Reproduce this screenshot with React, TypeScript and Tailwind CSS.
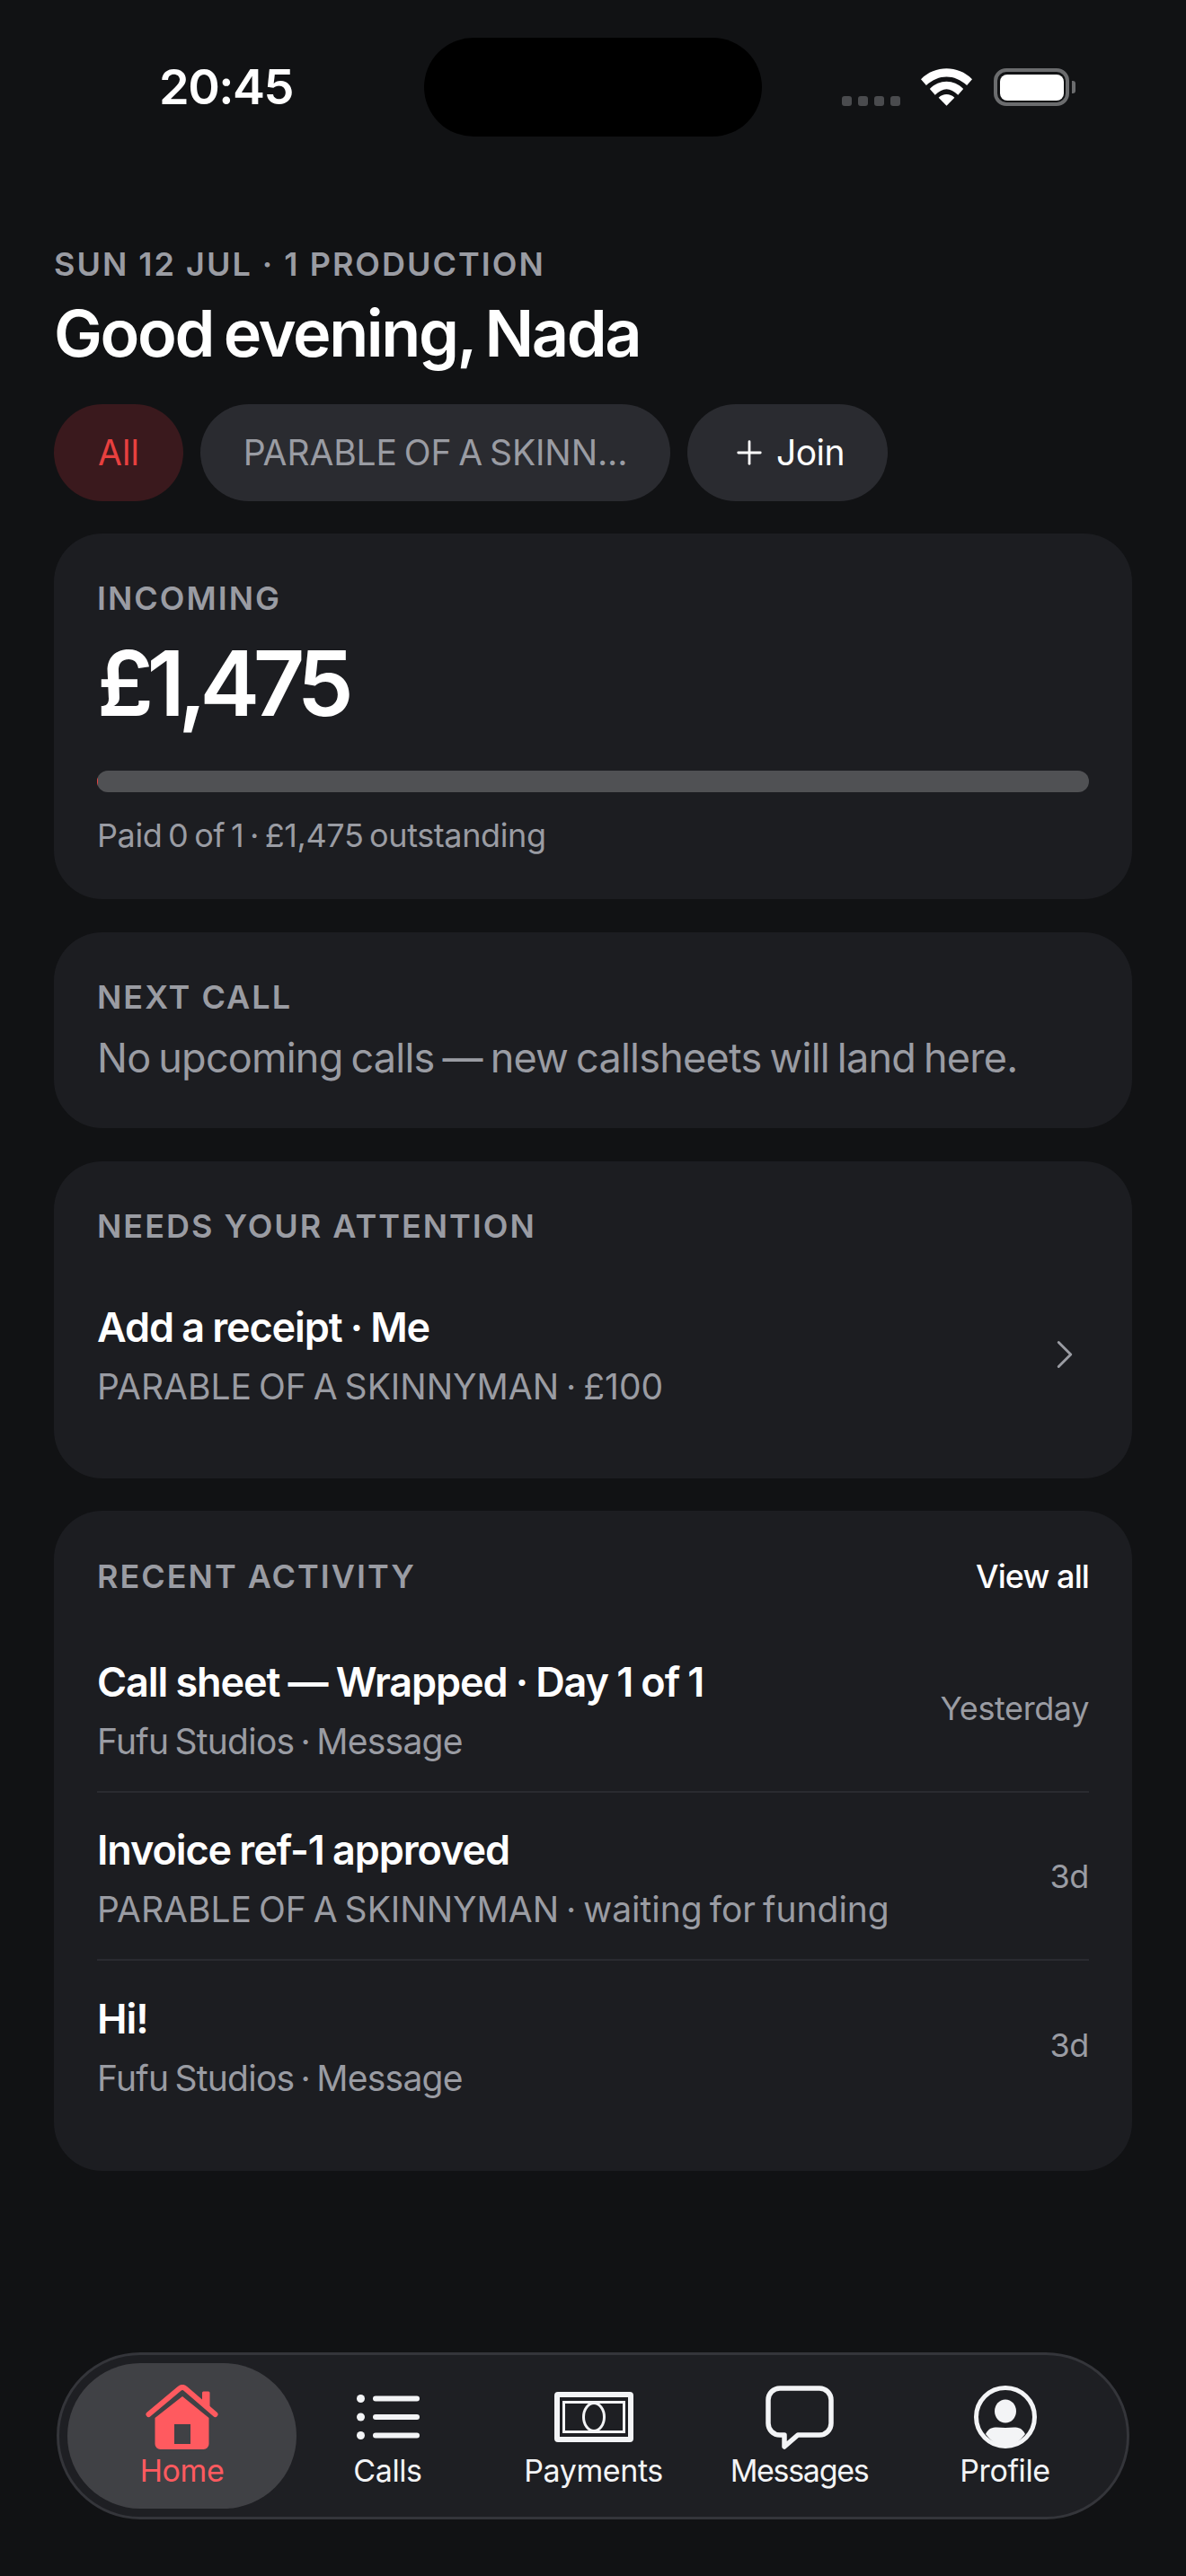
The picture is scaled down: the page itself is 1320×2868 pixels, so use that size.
import { ChevronRight, Plus } from "lucide-react";

const font = "font-['Inter','Liberation_Sans',sans-serif]";

const Eyebrow = (props: { children: React.ReactNode }) => (
  <div className="text-[36px] leading-[44px] font-semibold tracking-[2px] text-[#9a9ca3]">
    {props.children}
  </div>
);

const Card = (props: { className?: string; children: React.ReactNode }) => (
  <section className={`rounded-[54px] bg-[#1c1d21] px-[48px] ${props.className ?? ""}`}>
    {props.children}
  </section>
);

const StatusBar = () => (
  <div className="flex h-[152px] items-center pt-[42px] pl-[177px]">
    <div className="w-[295px] text-[54px] leading-[60px] font-semibold tracking-[-1.5px] text-white">20:45</div>
    <div className="h-[110px] w-[376px] rounded-[55px] bg-black" />
    <div className="ml-[89px] flex h-[42px] items-end">
      <div className="flex gap-[7px]">
        {[0, 1, 2, 3].map((i) => (
          <span key={i} className="h-[11px] w-[11px] rounded-[3px] bg-[#4a4b4e]" />
        ))}
      </div>
      <svg className="ml-[23px]" width="57" height="42" viewBox="0 0 58 42" fill="#fff">
        <path d="M0 12 C16 -4 42 -4 58 12 L52 19 C38 6 20 6 6 19 Z" />
        <path d="M10 23 C21 12 37 12 48 23 L42 30 C33 21 25 21 16 30 Z" />
        <path d="M20 33 C25 28 33 28 38 33 L29 42 Z" />
      </svg>
      <div className="ml-[24px] flex items-center">
        <div className="flex h-[42px] w-[84px] items-center justify-center rounded-[14px] border-[4px] border-[#6b6c6e]">
          <div className="h-[29px] w-[71px] rounded-[8px] bg-white" />
        </div>
        <div className="ml-[3px] h-[14px] w-[4px] rounded-r-[3px] bg-[#6b6c6e]" />
      </div>
    </div>
  </div>
);

const HomeIcon = () => (
  <svg width="82" height="72" viewBox="0 0 82 72" fill="#ff5a5f">
    <path d="M63 9 a1.5 1.5 0 0 1 1.5 -1.5 h5.5 a1.5 1.5 0 0 1 1.5 1.5 v18 l-8.5 -7.5 Z" />
    <path d="M41 13 L70.5 37 V66 a6 6 0 0 1 -6 6 H16.5 a6 6 0 0 1 -6 -6 V37 Z M32 44 V66 H50 V44 Z" fillRule="evenodd" />
    <path d="M3.5 33 L37.5 4.5 Q41 1.5 44.5 4.5 L77.5 33" fill="none" stroke="#ff5a5f" strokeWidth="6" strokeLinecap="round" strokeLinejoin="round" />
  </svg>
);

const CallsIcon = () => (
  <svg width="70" height="50" viewBox="0 0 70 50" fill="#f3f4f6">
    <circle cx="4.5" cy="4.5" r="4.5" />
    <circle cx="4.5" cy="25" r="4.5" />
    <circle cx="4.5" cy="45.5" r="4.5" />
    <rect x="18" y="1.5" width="52" height="6" rx="3" />
    <rect x="18" y="22" width="52" height="6" rx="3" />
    <rect x="18" y="42.5" width="52" height="6" rx="3" />
  </svg>
);

const PaymentsIcon = () => (
  <svg width="88" height="56" viewBox="0 0 88 56" fill="none" stroke="#f3f4f6">
    <rect x="3" y="3" width="82" height="50" rx="1" strokeWidth="6" />
    <rect x="10.5" y="11.5" width="67" height="33" strokeWidth="3" />
    <ellipse cx="44" cy="28" rx="11.5" ry="15.5" strokeWidth="3" />
  </svg>
);

const MessagesIcon = () => (
  <svg width="76" height="71" viewBox="0 0 76 71" fill="none" stroke="#f3f4f6" strokeWidth="5.5" strokeLinejoin="round">
    <path d="M16 3 H60 a13 13 0 0 1 13 13 V42 a13 13 0 0 1 -13 13 H36 L21 68 V55 H16 a13 13 0 0 1 -13 -13 V16 a13 13 0 0 1 13 -13 Z" />
  </svg>
);

const ProfileIcon = () => (
  <svg width="70" height="70" viewBox="0 0 70 70">
    <circle cx="35" cy="35" r="32.5" fill="none" stroke="#f3f4f6" strokeWidth="5" />
    <ellipse cx="35" cy="28.5" rx="12" ry="13" fill="#f3f4f6" />
    <path d="M13 54 C18 44 26 47 35 47 C44 47 52 44 57 54 C51 62 43 67 35 67 C27 67 19 62 13 54 Z" fill="#f3f4f6" />
  </svg>
);

const tabs = [
  { label: "Home", icon: <HomeIcon />, active: true, tracking: "tracking-[-0.4px]" },
  { label: "Calls", icon: <CallsIcon />, tracking: "tracking-[-0.4px]" },
  { label: "Payments", icon: <PaymentsIcon />, tracking: "tracking-[-0.4px]" },
  { label: "Messages", icon: <MessagesIcon />, tracking: "tracking-[-1.3px]" },
  { label: "Profile", icon: <ProfileIcon />, tracking: "tracking-[-0.4px]" },
];

const activity = [
  { title: "Call sheet — Wrapped · Day 1 of 1", sub: "Fufu Studios · Message", when: "Yesterday", tight: true },
  { title: "Invoice ref-1 approved", sub: "PARABLE OF A SKINNYMAN · waiting for funding", when: "3d" },
  { title: "Hi!", sub: "Fufu Studios · Message", when: "3d", tight: true },
];

export default function App() {
  return (
    <div className={`${font} flex h-[2868px] w-[1320px] flex-col overflow-hidden bg-[#111214] text-white`}>
      <StatusBar />

      <main className="flex flex-col px-[60px] pt-[120px]">
        <Eyebrow>SUN 12 JUL · 1 PRODUCTION</Eyebrow>
        <h1 className="mt-[11px] text-[72px] leading-[88px] font-semibold tracking-[-2.4px] [word-spacing:-4px]">Good evening, Nada</h1>

        <div className="mt-[35px] flex gap-[19px] text-[39px] leading-[108px]">
          <div className="w-[144px] rounded-full bg-[#3a191d] text-center text-[#e8403f]">All</div>
          <div className="w-[523px] rounded-full bg-[#2a2b30] text-center tracking-[-0.1px] text-[#9a9ca3] [word-spacing:-3px]">PARABLE OF A SKINN...</div>
          <div className="flex w-[223px] items-center justify-center gap-[9px] rounded-full bg-[#2a2b30] tracking-[-0.5px]">
            <Plus size={42} strokeWidth={1.6} />
            Join
          </div>
        </div>

        <div className="mt-[36px] flex flex-col gap-[37px]">
          <Card className="h-[407px] pt-[50px]">
            <Eyebrow>INCOMING</Eyebrow>
            <div className="mt-[17px] text-[100px] leading-[112px] font-semibold tracking-[-7.5px]">£1,475</div>
            <div className="mt-[41px] h-[24px] overflow-hidden rounded-full bg-[#505154]">
              <div className="h-full w-[1px] bg-[#e8403f]" />
            </div>
            <p className="mt-[24px] text-[36px] leading-[48px] tracking-[-0.4px] text-[#9a9ca3] [word-spacing:-3px]">Paid 0 of 1 · £1,475 outstanding</p>
          </Card>

          <Card className="h-[218px] pt-[50px]">
            <Eyebrow>NEXT CALL</Eyebrow>
            <p className="mt-[16px] text-[45px] leading-[60px] tracking-[-0.76px] text-[#9a9ca3] [word-spacing:-3px]">
              No upcoming calls — new callsheets will land here.
            </p>
          </Card>

          <Card className="h-[353px] pt-[50px]">
            <Eyebrow>NEEDS YOUR ATTENTION</Eyebrow>
            <div className="mt-[61px] flex items-center justify-between">
              <div>
                <div className="text-[45px] leading-[60px] font-semibold tracking-[-1.1px] [word-spacing:-1px]">Add a receipt · Me</div>
                <div className="mt-[9px] text-[39px] leading-[54px] text-[#9a9ca3] [word-spacing:-3px]">PARABLE OF A SKINNYMAN · £100</div>
              </div>
              <ChevronRight size={54} strokeWidth={1.3} className="-mt-[4px] text-[#9a9ca3]" />
            </div>
          </Card>

          <Card className="-mt-[1px] h-[735px] pt-[51px]">
            <div className="flex items-center justify-between">
              <Eyebrow>RECENT ACTIVITY</Eyebrow>
              <span className="text-[36px] leading-[44px] font-medium tracking-[-0.9px]">View all</span>
            </div>
            <div className="mt-[32px]">
              {activity.map((a, i) => (
                <div
                  key={a.title}
                  className={`flex h-[187px] items-center justify-between pt-[6px] ${i < activity.length - 1 ? "border-b-[2px] border-[#2a2b30]" : ""}`}
                >
                  <div>
                    <div className="text-[45px] leading-[60px] font-semibold tracking-[-1.1px] [word-spacing:-1px]">{a.title}</div>
                    <div className={`mt-[9px] text-[39px] leading-[54px] text-[#9a9ca3] [word-spacing:-3px] ${a.tight ? "tracking-[-0.75px]" : ""}`}>{a.sub}</div>
                  </div>
                  <span className="-mt-[6px] text-[36px] tracking-[-0.4px] text-[#9a9ca3]">{a.when}</span>
                </div>
              ))}
            </div>
          </Card>
        </div>
      </main>

      <nav className="mx-[63px] mt-auto mb-[63px] grid h-[186px] w-[1194px] grid-cols-[repeat(5,229px)] rounded-[93px] border-[3px] border-[#34353a] bg-[#1e1f23] px-[22px]">
        {tabs.map((t) => (
          <div
            key={t.label}
            className={`my-[9px] flex flex-col items-center justify-end pb-[20px] text-[34px] leading-[44px] ${t.tracking} ${t.active ? "-mx-[13px] rounded-[81px] bg-[#404145] text-[#ff5a5f]" : "text-[#f3f4f6]"}`}
          >
            <div className="mb-[2px] flex h-[72px] items-center">{t.icon}</div>
            {t.label}
          </div>
        ))}
      </nav>
    </div>
  );
}
